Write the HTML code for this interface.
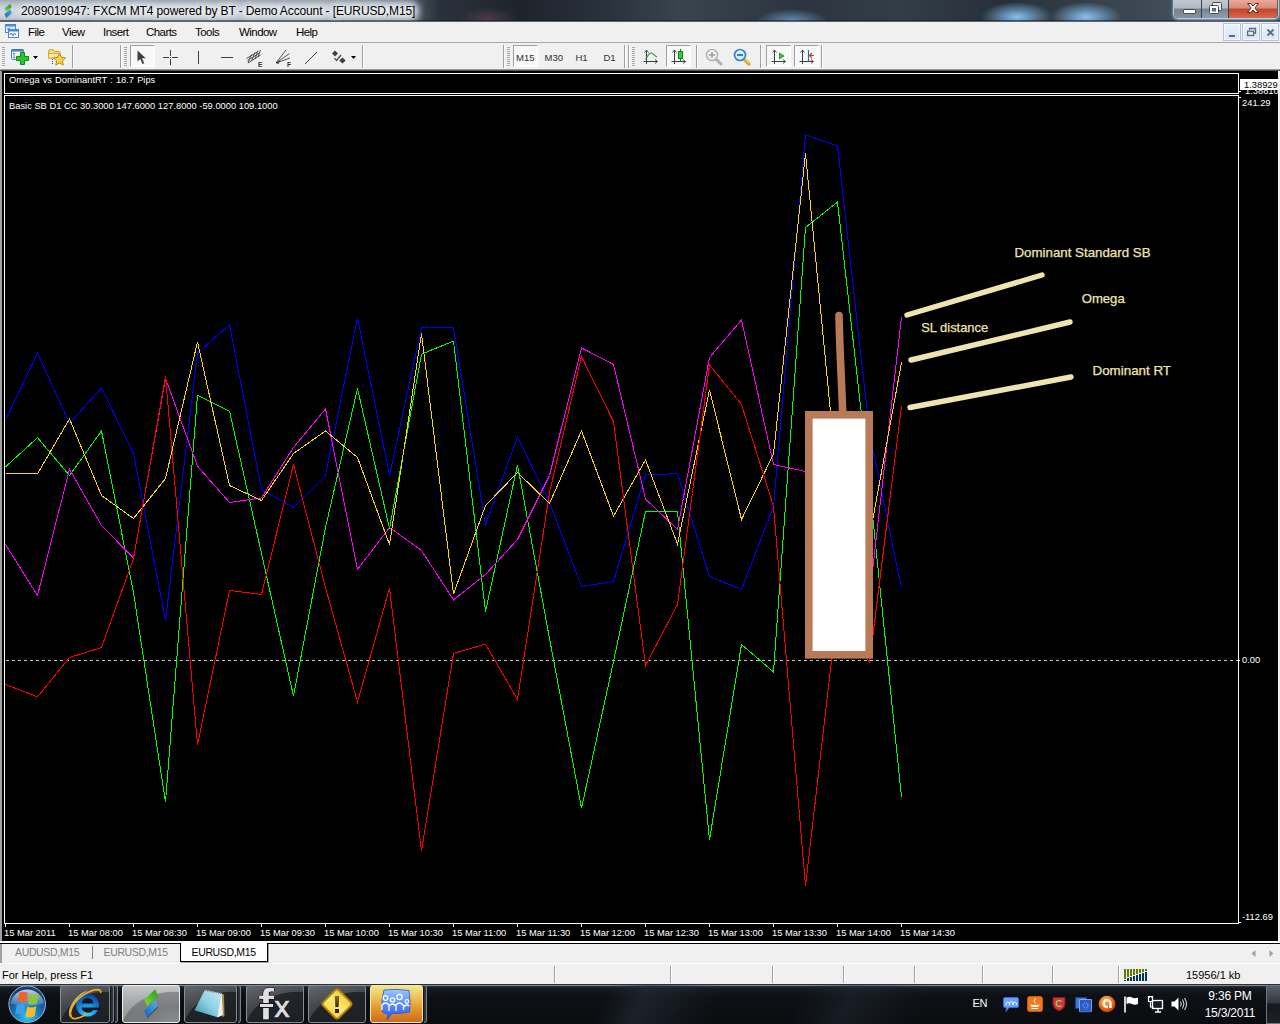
<!DOCTYPE html>
<html><head><meta charset="utf-8"><title>2089019947: FXCM MT4 powered by BT - Demo Account - [EURUSD,M15]</title>
<style>
html,body{margin:0;padding:0;}
body{width:1280px;height:1024px;overflow:hidden;position:relative;background:#f0f0f0;font-family:"Liberation Sans",sans-serif;font-size:11px;color:#000;}
.abs{position:absolute}
#title{position:absolute;left:0;top:0;width:1280px;height:21px;background:#2c343d;overflow:hidden}
#titletext{position:absolute;left:21px;top:3px;font-size:12px;letter-spacing:-0.12px;line-height:16px;white-space:nowrap;color:#000;text-shadow:0 0 6px #fff,0 0 8px #fff,0 0 10px rgba(255,255,255,.9)}
#menubar{position:absolute;left:0;top:22px;width:1280px;height:20px;background:#f0f0f0}
.mi{position:absolute;top:3.500px;font-size:11.500px;line-height:12px;white-space:nowrap;letter-spacing:-0.550px}
.mdib{position:absolute;top:1px;width:18px;height:18px;box-sizing:border-box;border:1px solid #b2c4dc;background:linear-gradient(180deg,#e8f1fb,#d9e6f5);box-shadow:inset 0 0 0 1px rgba(255,255,255,.6)}
#toolbar{position:absolute;left:0;top:43px;width:1280px;height:26px;background:#f0f0f0}
.selb{box-sizing:border-box;border:1px solid #a0a0a0;border-right-color:#fff;border-bottom-color:#fff;background:#f8f8f8}
.tf{position:absolute;top:9.500px;font-size:9.500px;line-height:10px;color:#303030;white-space:nowrap}
#chartbg{position:absolute;left:0;top:69px;width:1280px;height:872px;background:#000}
.ctext{position:absolute;color:#fff;font-size:9.330px;line-height:10px;white-space:nowrap;letter-spacing:0}
.tick{position:absolute;top:923px;width:1px;height:4px;background:#fff}
.tlab{position:absolute;top:927.500px;color:#fff;font-size:9.330px;line-height:10px;white-space:nowrap;letter-spacing:0;margin-left:-1px}
#tabbar{position:absolute;left:0;top:944px;width:1280px;height:19px;background:#f0f0f0}
#status{position:absolute;left:0;top:964px;width:1280px;height:20px;background:#f0f0f0}
#taskbar{position:absolute;left:0;top:984px;width:1280px;height:40px;background:#1b2027}
</style></head><body>
<div id="title">
<div class="abs" style="left:0;top:0;width:1280px;height:21px;background:
 radial-gradient(ellipse 36px 12px at 792px 21px, rgba(110,165,220,.8), rgba(110,165,220,0) 100%),
 radial-gradient(ellipse 36px 15px at 1017px 17px, rgba(140,200,250,.95), rgba(140,200,250,0) 100%),
 radial-gradient(ellipse 36px 15px at 1086px 17px, rgba(140,200,250,.95), rgba(140,200,250,0) 100%),
 radial-gradient(ellipse 30px 12px at 488px 19px, rgba(150,80,105,.4), rgba(150,80,105,0) 100%),
 linear-gradient(90deg,#8893a0 0,#7d8896 330px,#5a6572 400px,#2a313a 440px,#1e242c 520px,#28303a 600px,#39444f 680px,#2c353f 800px,#333d48 900px,#27303a 1000px,#3d4a56 1150px,#55636f 1280px)"></div>
<div class="abs" style="left:-12px;top:2px;width:430px;height:19px;border-radius:8px;background:#d3d9e1;filter:blur(4px)"></div>
<div class="abs" style="left:0;top:20px;width:1280px;height:1px;background:rgba(20,25,30,.55)"></div>
<svg class="abs" style="left:0px;top:0px" width="18" height="20" viewBox="0 0 18 20"><defs><linearGradient id="tg" x1="0" y1="1" x2="1" y2="0"><stop offset="0" stop-color="#7ad33a"/><stop offset="1" stop-color="#2a9a14"/></linearGradient><linearGradient id="tb" x1="0" y1="1" x2="1" y2="0"><stop offset="0" stop-color="#1468c0"/><stop offset="1" stop-color="#4aaee0"/></linearGradient></defs><path d="M10.300 3.800L11.600 7.500 5.800 11.600 4.500 8.200z" fill="url(#tg)"/><path d="M10.300 8.900L11.600 12.700 6.200 17.800 4.500 14z" fill="url(#tb)"/><path d="M6.200 17.800L11.600 12.700 12 13.300 6.600 18.300z" fill="#333" opacity=".5"/></svg>
<div id="titletext">2089019947: FXCM MT4 powered by BT - Demo Account - [EURUSD,M15]</div>
<!-- caption buttons -->
<div class="abs" style="left:1173px;top:-1px;width:104px;height:19px;border:1px solid rgba(230,240,250,.75);border-top:none;border-radius:0 0 5px 5px;box-shadow:0 1px 3px rgba(160,210,255,.8)"></div>
<div class="abs" style="left:1174px;top:0;width:28px;height:18px;border-radius:0 0 0 4px;background:linear-gradient(180deg,#c2c9d1 0,#b0b8c2 45%,#77838f 50%,#8593a0 100%);border-right:1px solid #39424c;box-sizing:border-box"></div>
<div class="abs" style="left:1202px;top:0;width:27px;height:18px;background:linear-gradient(180deg,#c2c9d1 0,#b0b8c2 45%,#77838f 50%,#8e9fb2 100%);border-right:1px solid #39424c;box-sizing:border-box"></div>
<div class="abs" style="left:1229px;top:0;width:48px;height:18px;border-radius:0 0 4px 0;background:linear-gradient(180deg,#e9a99a 0,#d98a78 45%,#c3432a 50%,#d6694c 100%)"></div>
<div class="abs" style="left:1183px;top:9px;width:11px;height:3px;background:#fff;border:1px solid #4a5058;border-radius:1px"></div>
<svg class="abs" style="left:1207px;top:1px" width="16" height="14" viewBox="0 0 16 14"><rect x="5.5" y="1.5" width="9" height="8" rx="1" fill="#e8eaec" stroke="#454b55"/><rect x="2.5" y="4.5" width="9" height="8" rx="1" fill="#fff" stroke="#454b55"/><rect x="5.5" y="7.5" width="3" height="2.5" fill="#7b8796" stroke="#454b55" stroke-width=".8"/></svg>
<svg class="abs" style="left:1246px;top:2px" width="14" height="12" viewBox="0 0 14 12"><path d="M1.5 1.5h3.2L7 4l2.3-2.5h3.2L8.8 6l3.7 4.5H9.3L7 8 4.7 10.500H1.5L5.200 6Z" fill="#fff" stroke="#5a2a25" stroke-width="1"/></svg>
</div>
<div class="abs" style="left:0;top:21px;width:1280px;height:1px;background:#5d646c"></div>
<div id="menubar">
<svg class="abs" style="left:4px;top:0px" width="16" height="18" viewBox="0 0 16 18"><rect x="1.500" y="2.500" width="10" height="8" fill="#e6f0fb" stroke="#4a86d8"/><rect x="1.500" y="2.500" width="10" height="2" fill="#4a86d8"/><rect x="4.500" y="7.500" width="10" height="8" fill="#f4f9ff" stroke="#4a86d8"/><rect x="4.500" y="7.500" width="10" height="2" fill="#4a86d8"/><path d="M6 13l1.500-2 1.500 3 1.500-3 1.500 2" stroke="#3a6fc0" fill="none" stroke-width=".9"/><path d="M3 7h2l1-1.500" stroke="#3a6fc0" fill="none" stroke-width=".9"/></svg>
<div class="mi" style="left:28px">File</div>
<div class="mi" style="left:62px">View</div>
<div class="mi" style="left:103px">Insert</div>
<div class="mi" style="left:146px">Charts</div>
<div class="mi" style="left:195px">Tools</div>
<div class="mi" style="left:239px">Window</div>
<div class="mi" style="left:296px">Help</div>
<div class="mdib" style="left:1223px"><div class="abs" style="left:5px;top:11px;width:6px;height:2px;background:#5d6b7d"></div></div>
<div class="mdib" style="left:1242px"><svg class="abs" style="left:3px;top:3px" width="11" height="10" viewBox="0 0 11 10"><path d="M3.500 3V1.500h6v4.500H8" fill="none" stroke="#5d6b7d" stroke-width="1.300"/><rect x="1.600" y="4.200" width="6" height="4.300" fill="none" stroke="#5d6b7d" stroke-width="1.300"/></svg></div>
<div class="mdib" style="left:1261px"><svg class="abs" style="left:4px;top:4px" width="9" height="9" viewBox="0 0 9 9"><path d="M1.500 1.500l6 6M7.500 1.500l-6 6" stroke="#5d6b7d" stroke-width="1.900"/></svg></div>
</div>
<div class="abs" style="left:0;top:42px;width:1280px;height:1px;background:#a8a8a8"></div>
<div id="toolbar"><div class="abs" style="left:2px;top:4px;width:3px;height:19px;background:repeating-linear-gradient(180deg,#a8a8a8 0,#a8a8a8 1px,#f0f0f0 1px,#f0f0f0 2px)"></div><svg class="abs" style="left:10px;top:5px" width="20" height="17" viewBox="0 0 20 17"><rect x="1.500" y="1.500" width="12" height="10" rx="1" fill="#f2f7fd" stroke="#3b7bd0"/><rect x="1.500" y="1.500" width="12" height="2" fill="#3b7bd0"/><path d="M4 5v5M3 6l1-1.200 1 1.200M3 9l1 1.200 1-1.200" stroke="#5a7fae" fill="none" stroke-width=".8"/><path d="M10.500 4.500h4v4h4v4h-4v4h-4v-4h-4v-4h4z" fill="#2fc42f" stroke="#0f8a12" stroke-width="1"/></svg><svg class="abs" style="left:33px;top:13px" width="5" height="3" viewBox="0 0 5 3"><path d="M0 0h5L2.500 3z" fill="#000"/></svg><svg class="abs" style="left:47px;top:5px" width="20" height="18" viewBox="0 0 20 18"><path d="M1.500 3.500q0-2 2-2h2.500l1.500 2h4.500q1 0 1 1v5.500h-11.500z" fill="#f7dc7a" stroke="#c9a227"/><path d="M1.500 5.500h11.500v4.500h-11.500z" fill="#fbeaa5" stroke="#c9a227" stroke-width=".8"/><path d="M5.500 11v6" stroke="#505050" stroke-dasharray="1 1"/><path d="M12.500 5.500l1.900 3.800 4.100.6-3 2.900.7 4.200-3.700-2-3.700 2 .7-4.200-3-2.900 4.100-.6z" fill="#f6d24a" stroke="#b88a14" stroke-width="1"/></svg><div class="abs" style="left:72px;top:2px;width:1px;height:23px;background:#a0a0a0"></div><div class="abs" style="left:73px;top:2px;width:1px;height:23px;background:#fff"></div><div class="abs" style="left:120px;top:2px;width:1px;height:23px;background:#a0a0a0"></div><div class="abs" style="left:121px;top:2px;width:1px;height:23px;background:#fff"></div><div class="abs" style="left:124px;top:4px;width:3px;height:19px;background:repeating-linear-gradient(180deg,#a8a8a8 0,#a8a8a8 1px,#f0f0f0 1px,#f0f0f0 2px)"></div><div class="abs selb" style="left:130px;top:2px;width:25px;height:22px"></div><svg class="abs" style="left:137px;top:7px" width="10" height="15" viewBox="0 0 10 15"><path d="M0.500 0.500v11l2.700-2.500 2.300 5 1.800-.8-2.300-4.900h3.800z" fill="#404040"/></svg><svg class="abs" style="left:163px;top:7px" width="15" height="15" viewBox="0 0 15 15"><path d="M7.500 0v6M7.500 9v6M0 7.500h6M9 7.500h6" stroke="#404040"/><rect x="7" y="7" width="1" height="1" fill="#404040"/></svg><div class="abs" style="left:198px;top:8px;width:1px;height:13px;background:#404040"></div><div class="abs" style="left:221px;top:14px;width:12px;height:1px;background:#404040"></div><svg class="abs" style="left:246px;top:6px" width="17" height="18" viewBox="0 0 17 18"><path d="M0.500 9.500L12 2.500M2 14L14.500 6M1.500 11.500L13.500 4" stroke="#404040" stroke-width=".9" fill="none"/><path d="M2 13.500L5.500 5.500M5.500 12L9 3.500M9 10L12 1.500M12 8L14.500 1" stroke="#404040" stroke-width=".9" fill="none"/><text x="12" y="17.500" font-family="Liberation Sans,sans-serif" font-size="6.500" font-weight="bold" fill="#303030">E</text></svg><svg class="abs" style="left:275px;top:6px" width="17" height="18" viewBox="0 0 17 18"><path d="M1 14L11 1M1 14L14.500 4.500M1 14L15 9" stroke="#404040" stroke-width=".9" fill="none"/><path d="M1 14l4-2.500-1.500 3.500z" fill="#404040"/><text x="12" y="17.500" font-family="Liberation Sans,sans-serif" font-size="6.500" font-weight="bold" fill="#303030">F</text></svg><svg class="abs" style="left:304px;top:8px" width="14" height="14" viewBox="0 0 14 14"><path d="M1 13L13 1" stroke="#404040" stroke-width="1"/></svg><svg class="abs" style="left:331px;top:7px" width="16" height="15" viewBox="0 0 16 15"><path d="M4 0.500l3 3-3 3-3-3z" fill="#404040"/><path d="M11.500 7.500l3.200 3-3.200 3-3.200-3z" fill="#404040"/><path d="M3.500 8l2 2.500L10 5" stroke="#404040" fill="none" stroke-width="1.200"/></svg><svg class="abs" style="left:351px;top:13px" width="5" height="3" viewBox="0 0 5 3"><path d="M0 0h5L2.500 3z" fill="#000"/></svg><div class="abs" style="left:362px;top:2px;width:1px;height:23px;background:#a0a0a0"></div><div class="abs" style="left:363px;top:2px;width:1px;height:23px;background:#fff"></div><div class="abs" style="left:503px;top:2px;width:1px;height:23px;background:#a0a0a0"></div><div class="abs" style="left:504px;top:2px;width:1px;height:23px;background:#fff"></div><div class="abs" style="left:507px;top:4px;width:3px;height:19px;background:repeating-linear-gradient(180deg,#a8a8a8 0,#a8a8a8 1px,#f0f0f0 1px,#f0f0f0 2px)"></div><div class="abs selb" style="left:513px;top:2px;width:25px;height:22px"></div><div class="tf" style="left:516px">M15</div><div class="tf" style="left:544.500px">M30</div><div class="tf" style="left:575.500px">H1</div><div class="tf" style="left:603.500px">D1</div><div class="abs" style="left:624px;top:2px;width:1px;height:23px;background:#a0a0a0"></div><div class="abs" style="left:625px;top:2px;width:1px;height:23px;background:#fff"></div><div class="abs" style="left:628px;top:2px;width:1px;height:23px;background:#a0a0a0"></div><div class="abs" style="left:629px;top:2px;width:1px;height:23px;background:#fff"></div><div class="abs" style="left:632px;top:4px;width:3px;height:19px;background:repeating-linear-gradient(180deg,#a8a8a8 0,#a8a8a8 1px,#f0f0f0 1px,#f0f0f0 2px)"></div><svg class="abs" style="left:643px;top:6px" width="16" height="16" viewBox="0 0 16 16"><path d="M3.500 1v14M0.500 12.500h14" stroke="#404040" fill="none"/><path d="M1.500 3.500l2-2.500 2 2.500M12 10.500l2.500 2-2.500 2" stroke="#404040" fill="none" stroke-width=".9"/><path d="M2.500 10.500C5 6 7 3.500 8.500 4S12 7 14 8" stroke="#2e9a3c" fill="none" stroke-width="1.200"/></svg><div class="abs selb" style="left:666px;top:2px;width:25px;height:22px"></div><svg class="abs" style="left:671px;top:6px" width="16" height="16" viewBox="0 0 16 16"><path d="M3.500 1v14M0.500 12.500h14" stroke="#404040" fill="none"/><path d="M1.500 3.500l2-2.500 2 2.500M12 10.500l2.500 2-2.500 2" stroke="#404040" fill="none" stroke-width=".9"/><path d="M9.500 0v12" stroke="#0a8a1a"/><rect x="7.500" y="2.500" width="4" height="7" fill="#2fd03a" stroke="#0a8a1a"/></svg><div class="abs" style="left:696px;top:2px;width:1px;height:23px;background:#a0a0a0"></div><div class="abs" style="left:697px;top:2px;width:1px;height:23px;background:#fff"></div><svg class="abs" style="left:705px;top:5px" width="18" height="18" viewBox="0 0 18 18"><path d="M10.500 10.500l5.500 5.500" stroke="#b0b0b0" stroke-width="3" stroke-linecap="round"/><circle cx="7" cy="7" r="5.500" fill="#f4f4f4" stroke="#b4b4b4" stroke-width="1.600"/><path d="M4 7h6M7 4v6" stroke="#a8a8a8" stroke-width="1.800"/></svg><svg class="abs" style="left:733px;top:5px" width="18" height="18" viewBox="0 0 18 18"><path d="M10.500 10.500l5.500 5.500" stroke="#d9a520" stroke-width="3.200" stroke-linecap="round"/><path d="M11 10l5 5" stroke="#f5d060" stroke-width="1.200" stroke-linecap="round"/><circle cx="7" cy="7" r="5.500" fill="#dcecfb" stroke="#2f7fd6" stroke-width="1.700"/><path d="M4 7h6" stroke="#2f7fd6" stroke-width="2"/></svg><div class="abs" style="left:760px;top:2px;width:1px;height:23px;background:#a0a0a0"></div><div class="abs" style="left:761px;top:2px;width:1px;height:23px;background:#fff"></div><div class="abs selb" style="left:766px;top:2px;width:25px;height:22px"></div><svg class="abs" style="left:771px;top:6px" width="16" height="16" viewBox="0 0 16 16"><path d="M3.500 1v14M0.500 12.500h14" stroke="#404040" fill="none"/><path d="M1.500 3.500l2-2.500 2 2.500M12 10.500l2.500 2-2.500 2" stroke="#404040" fill="none" stroke-width=".9"/><path d="M8.500 4l4.500 3-4.500 3z" fill="#2fc83a" stroke="#0a8a1a" stroke-width=".7"/></svg><div class="abs selb" style="left:794px;top:2px;width:25px;height:22px"></div><svg class="abs" style="left:799px;top:6px" width="16" height="16" viewBox="0 0 16 16"><path d="M3.500 1v14M0.500 12.500h14" stroke="#404040" fill="none"/><path d="M1.500 3.500l2-2.500 2 2.500M12 10.500l2.500 2-2.500 2" stroke="#404040" fill="none" stroke-width=".9"/><path d="M9.500 1v11" stroke="#1a6fc8" stroke-width="1.200"/><path d="M15 6.500h-4M13 4l-2.500 2.500L13 9" stroke="#d03a10" fill="none" stroke-width="1.200"/></svg><div class="abs" style="left:821px;top:2px;width:1px;height:23px;background:#a0a0a0"></div><div class="abs" style="left:822px;top:2px;width:1px;height:23px;background:#fff"></div></div>
<div id="chartbg"></div>

<div class="abs" style="left:0;top:69px;width:2px;height:872px;background:#a0a0a0"></div>
<div class="abs" style="left:1278px;top:69px;width:2px;height:872px;background:#f0f0f0"></div>
<div class="abs" style="left:0;top:69px;width:1280px;height:1px;background:#9a9a9a"></div>
<div class="abs" style="left:0;top:70px;width:1280px;height:1px;background:#505050"></div>
<!-- pane 1 -->
<div class="abs" style="left:4px;top:73px;width:1233px;height:19px;border:1px solid #fff"></div>
<!-- pane 2 -->
<div class="abs" style="left:4px;top:95px;width:1233px;height:827px;border:1px solid #fff"></div>
<div class="ctext" style="left:9px;top:75px;word-spacing:0.500px">Omega vs DominantRT : 18.7 Pips</div>
<div class="ctext" style="left:9px;top:100.500px">Basic SB D1 CC 30.3000 147.6000 127.8000 -59.0000 109.1000</div>
<!-- price axis -->
<div class="abs" style="left:1239px;top:91px;width:2px;height:1px;background:#fff"></div>
<div class="abs" style="left:1239px;top:97px;width:2px;height:1px;background:#fff"></div>
<div class="abs" style="left:1239px;top:660px;width:1px;height:1px;background:#fff"></div>
<div class="abs" style="left:1239px;top:922px;width:2px;height:1px;background:#fff"></div>
<div class="ctext" style="left:1245px;top:85.700px">1.38810</div>
<div class="abs" style="left:1240px;top:79px;width:38px;height:11px;background:#fff"></div>
<div class="ctext" style="left:1244px;top:79.500px;color:#000">1.38929</div>
<div class="ctext" style="left:1242px;top:98px">241.29</div>
<div class="ctext" style="left:1242px;top:655px">0.00</div>
<div class="ctext" style="left:1242px;top:912px">-112.69</div>
<!-- bottom lines -->
<div class="abs" style="left:0;top:941px;width:1280px;height:2px;background:#fff"></div>
<div class="abs" style="left:0;top:943px;width:1280px;height:1px;background:#000"></div>

<div class="tick" style="left:5px"></div><div class="tlab" style="left:5px">15 Mar 2011</div><div class="tick" style="left:69px"></div><div class="tlab" style="left:69px">15 Mar 08:00</div><div class="tick" style="left:133px"></div><div class="tlab" style="left:133px">15 Mar 08:30</div><div class="tick" style="left:197px"></div><div class="tlab" style="left:197px">15 Mar 09:00</div><div class="tick" style="left:261px"></div><div class="tlab" style="left:261px">15 Mar 09:30</div><div class="tick" style="left:325px"></div><div class="tlab" style="left:325px">15 Mar 10:00</div><div class="tick" style="left:389px"></div><div class="tlab" style="left:389px">15 Mar 10:30</div><div class="tick" style="left:453px"></div><div class="tlab" style="left:453px">15 Mar 11:00</div><div class="tick" style="left:517px"></div><div class="tlab" style="left:517px">15 Mar 11:30</div><div class="tick" style="left:581px"></div><div class="tlab" style="left:581px">15 Mar 12:00</div><div class="tick" style="left:645px"></div><div class="tlab" style="left:645px">15 Mar 12:30</div><div class="tick" style="left:709px"></div><div class="tlab" style="left:709px">15 Mar 13:00</div><div class="tick" style="left:773px"></div><div class="tlab" style="left:773px">15 Mar 13:30</div><div class="tick" style="left:837px"></div><div class="tlab" style="left:837px">15 Mar 14:00</div><div class="tick" style="left:901px"></div><div class="tlab" style="left:901px">15 Mar 14:30</div>

<svg id="chart" width="1280" height="1024" viewBox="0 0 1280 1024" style="position:absolute;left:0;top:0">
 <g fill="none" stroke-width="1" shape-rendering="crispEdges" stroke-linejoin="miter">
  <line x1="5" y1="660.5" x2="1238" y2="660.5" stroke="#c8c8c8" stroke-dasharray="3 3" stroke-dashoffset="5"/>
  <polyline stroke="#0000ff" points="5.5,420.1 37.5,352.9 69.5,423.5 101.5,387.9 133.5,453.5 165.5,620.5 197.5,352.9 229.5,324.9 261.5,489.5 293.5,507.5 325.5,475.5 357.5,317.9 389.5,475.5 421.5,327.5 453.5,327.5 485.5,524.9 517.5,436.9 549.5,502.5 581.5,586.5 613.5,581.5 645.5,474.9 677.5,473.7 709.5,576.5 741.5,589.5 773.5,506.5 805.5,134.9 837.5,145.9 869.5,432.5 901.5,588.5"/>
  <polyline stroke="#00ff00" points="5.5,466.9 37.5,437.7 69.5,475.5 101.5,430.9 133.5,592.5 165.5,802.1 197.5,395.1 229.5,411.1 261.5,553.5 293.5,696.1 325.5,527.5 357.5,388.5 389.5,528.5 421.5,354.1 453.5,341.1 485.5,611.5 517.5,464.9 549.5,638.5 581.5,808.1 613.5,661.5 645.5,511.5 677.5,511.5 709.5,839.9 741.5,644.5 773.5,671.9 805.5,227.5 837.5,202.1 869.5,485.5 901.5,797.1"/>
  <polyline stroke="#ff00ff" points="5.5,544.5 37.5,595.5 69.5,469.1 101.5,525.5 133.5,558.1 165.5,378.5 197.5,466.1 229.5,502.5 261.5,497.9 293.5,447.5 325.5,408.9 357.5,569.5 389.5,527.5 421.5,550.5 453.5,599.9 485.5,574.5 517.5,539.5 549.5,475.5 581.5,347.9 613.5,364.5 645.5,499.0 677.5,529.5 709.5,357.5 741.5,319.9 773.5,464.5 805.5,471.5 837.5,520.5 869.5,597.5 901.5,316.9"/>
  <polyline stroke="#ffd700" points="5.5,473.7 37.5,473.7 69.5,418.9 101.5,495.5 133.5,518.5 165.5,478.5 197.5,341.9 229.5,485.5 261.5,500.5 293.5,453.5 325.5,430.9 357.5,457.5 389.5,544.5 421.5,333.5 453.5,594.1 485.5,505.5 517.5,472.5 549.5,503.5 581.5,430.9 613.5,516.1 645.5,459.9 677.5,544.1 709.5,389.9 741.5,519.5 773.5,454.1 805.5,153.5 837.5,484.5 869.5,537.5 901.5,362.5"/>
  <polyline stroke="#ff0000" points="5.5,684.5 37.5,696.9 69.5,657.5 101.5,647.5 133.5,558.5 165.5,376.5 197.5,744.9 229.5,590.5 261.5,594.5 293.5,464.5 325.5,587.5 357.5,702.1 389.5,588.1 421.5,850.9 453.5,653.5 485.5,644.1 517.5,699.5 549.5,492.5 581.5,356.5 613.5,421.5 645.5,665.5 677.5,604.5 709.5,364.9 741.5,404.5 773.5,506.5 805.5,886.0 837.5,608.5 869.5,662.5 901.5,406.5"/>
 </g>
 <!-- paint annotations -->
 <g stroke="#efe4b0" stroke-width="5.400" stroke-linecap="round" fill="none">
  <line x1="907" y1="315" x2="1042" y2="275"/>
  <line x1="911" y1="360" x2="1070" y2="322"/>
  <line x1="910" y1="407.5" x2="1071" y2="377"/>
 </g>
 <path d="M839 315.500 C839.500 345 841.500 380 842.700 412" stroke="#b97a57" stroke-width="7.600" stroke-linecap="round" fill="none"/>
 <rect x="808.8" y="414.8" width="60.4" height="240" fill="#ffffff" stroke="#b97a57" stroke-width="7.6"/>
 <g font-family="'Liberation Sans',sans-serif" font-size="13" fill="#efe4b0" stroke="#efe4b0" stroke-width="0.25">
  <text x="1014.5" y="256.7" textLength="136" lengthAdjust="spacingAndGlyphs">Dominant Standard SB</text>
  <text x="1081.7" y="303" textLength="43" lengthAdjust="spacingAndGlyphs">Omega</text>
  <text x="921.2" y="331.7" textLength="67" lengthAdjust="spacingAndGlyphs">SL distance</text>
  <text x="1092.5" y="375" textLength="78.5" lengthAdjust="spacingAndGlyphs">Dominant RT</text>
 </g>
</svg>

<div id="tabbar">
<div class="abs" style="left:0;top:0;width:2px;height:19px;background:#a0a0a0"></div>
<div class="abs" style="left:15px;top:2px;font-size:10.500px;line-height:13px;color:#808080;letter-spacing:-0.35px">AUDUSD,M15</div>
<div class="abs" style="left:92px;top:2px;width:1px;height:13px;background:#808080"></div>
<div class="abs" style="left:103.500px;top:2px;font-size:10.500px;line-height:13px;color:#808080;letter-spacing:-0.35px">EURUSD,M15</div>
<div class="abs" style="left:180px;top:-1px;width:86px;height:18px;background:#fff;border:1px solid #000;border-top:none;box-shadow:1px 1px 0 #a0a0a0"></div>
<div class="abs" style="left:191.500px;top:2px;font-size:10.500px;line-height:13px;color:#000;letter-spacing:-0.35px">EURUSD,M15</div>
<svg class="abs" style="left:1250px;top:5px" width="26" height="9" viewBox="0 0 26 9"><path d="M5.500 1v7L1.500 4.500zM19.500 1v7l4-3.500z" fill="#a0a0a0"/></svg>
</div>
<div id="status"><div class="abs" style="left:0;top:-1px;width:1280px;height:1px;background:#fff"></div><div class="abs" style="left:2px;top:5px;font-size:11px;line-height:13px;letter-spacing:0px">For Help, press F1</div><div class="abs" style="left:554px;top:2px;width:1px;height:17px;background:#a0a0a0"></div><div class="abs" style="left:555px;top:2px;width:1px;height:17px;background:#fff"></div><div class="abs" style="left:670px;top:2px;width:1px;height:17px;background:#a0a0a0"></div><div class="abs" style="left:671px;top:2px;width:1px;height:17px;background:#fff"></div><div class="abs" style="left:772px;top:2px;width:1px;height:17px;background:#a0a0a0"></div><div class="abs" style="left:773px;top:2px;width:1px;height:17px;background:#fff"></div><div class="abs" style="left:843px;top:2px;width:1px;height:17px;background:#a0a0a0"></div><div class="abs" style="left:844px;top:2px;width:1px;height:17px;background:#fff"></div><div class="abs" style="left:914px;top:2px;width:1px;height:17px;background:#a0a0a0"></div><div class="abs" style="left:915px;top:2px;width:1px;height:17px;background:#fff"></div><div class="abs" style="left:982px;top:2px;width:1px;height:17px;background:#a0a0a0"></div><div class="abs" style="left:983px;top:2px;width:1px;height:17px;background:#fff"></div><div class="abs" style="left:1052px;top:2px;width:1px;height:17px;background:#a0a0a0"></div><div class="abs" style="left:1053px;top:2px;width:1px;height:17px;background:#fff"></div><div class="abs" style="left:1118px;top:2px;width:1px;height:17px;background:#a0a0a0"></div><div class="abs" style="left:1119px;top:2px;width:1px;height:17px;background:#fff"></div><div class="abs" style="left:1124px;top:5px;width:2px;height:9.5px;background:#5f7c00"></div><div class="abs" style="left:1124px;top:15.5px;width:2px;height:1.5px;background:#00395c"></div><div class="abs" style="left:1127px;top:5px;width:2px;height:8.4px;background:#5f7c00"></div><div class="abs" style="left:1127px;top:14.4px;width:2px;height:2.6px;background:#00395c"></div><div class="abs" style="left:1130px;top:5px;width:2px;height:7.4px;background:#5f7c00"></div><div class="abs" style="left:1130px;top:13.4px;width:2px;height:3.6px;background:#00395c"></div><div class="abs" style="left:1133px;top:5px;width:2px;height:6.3px;background:#5f7c00"></div><div class="abs" style="left:1133px;top:12.3px;width:2px;height:4.7px;background:#00395c"></div><div class="abs" style="left:1136px;top:5px;width:2px;height:5.2px;background:#5f7c00"></div><div class="abs" style="left:1136px;top:11.2px;width:2px;height:5.8px;background:#00395c"></div><div class="abs" style="left:1139px;top:5px;width:2px;height:4.1px;background:#5f7c00"></div><div class="abs" style="left:1139px;top:10.1px;width:2px;height:6.9px;background:#00395c"></div><div class="abs" style="left:1142px;top:5px;width:2px;height:3.1px;background:#5f7c00"></div><div class="abs" style="left:1142px;top:9.1px;width:2px;height:7.9px;background:#00395c"></div><div class="abs" style="left:1145px;top:5px;width:2px;height:2.0px;background:#5f7c00"></div><div class="abs" style="left:1145px;top:8.0px;width:2px;height:9.0px;background:#00395c"></div><div class="abs" style="left:1186px;top:5px;font-size:11px;line-height:13px;letter-spacing:0px">15956/1 kb</div></div>
<div id="taskbar"><div class="abs" style="left:0;top:0;width:1280px;height:40px;background:linear-gradient(115deg,rgba(40,50,62,0) 0,rgba(40,50,62,0) 47%,rgba(40,50,62,.55) 50%,rgba(40,50,62,0) 56%,rgba(40,50,62,.0) 62%,rgba(40,50,62,.4) 66%,rgba(40,50,62,0) 72%),linear-gradient(180deg,#2a3038 0,#2a3038 1px,#7d8791 1px,#7d8791 2px,#2c333b 2px,#171b21 4px,#0d1014 12px,#0a0c10 100%)"></div><svg class="abs" style="left:7px;top:1px" width="40" height="39" viewBox="0 0 40 39">
<defs><radialGradient id="og" cx="50%" cy="85%" r="75%"><stop offset="0" stop-color="#1ed0ff"/><stop offset=".45" stop-color="#1878c0"/><stop offset="1" stop-color="#0e3f78"/></radialGradient>
<linearGradient id="oh" x1="0" y1="0" x2="0" y2="1"><stop offset="0" stop-color="#fff" stop-opacity=".75"/><stop offset="1" stop-color="#fff" stop-opacity=".12"/></linearGradient></defs>
<circle cx="20.200" cy="19.200" r="18.300" fill="url(#og)" stroke="#9fb8cc" stroke-width="1"/>
<path d="M3.500 18.500A17 17 0 0 1 37 18.500Q20 23.500 3.500 18.500z" fill="url(#oh)"/>
<g transform="translate(20.200 19.700) scale(1.220) translate(-19.500 -19.500)"><path d="M13 9.500q3.500-1.500 7 .5l-1.500 8q-3.500-2-7-.5z" fill="#f0642a"/>
<path d="M21.500 10.500q3.500 2 7.500-.5l-1.500 8.500q-4 2-7.500 0z" fill="#8cc63e"/>
<path d="M11 19.500q3.500-1.500 7 .5l-1.500 8q-3.500-2-7-.5z" fill="#3aa0e8"/>
<path d="M19.500 21q3.500 2 7.500-.5l-1.500 8.500q-4 2-7.500 0z" fill="#fdb92a"/></g>
</svg><div class="abs" style="left:60px;top:1px;width:50px;height:38px;box-sizing:border-box;border:1px solid #878d93;border-radius:3px;background:radial-gradient(ellipse 95% 115% at 90% 130%,rgba(22,25,29,.75) 0,rgba(22,25,29,.75) 98%,rgba(0,0,0,0) 100%),linear-gradient(165deg,#63676c 0,#43474c 45%,#2c3035 100%)"></div><div class="abs" style="left:111px;top:1px;width:3px;height:38px;box-sizing:border-box;border:1px solid #7a8086;border-left:none;border-radius:0 3px 3px 0;background:#2e3238"></div><div class="abs" style="left:115px;top:1px;width:3px;height:38px;box-sizing:border-box;border:1px solid #7a8086;border-left:none;border-radius:0 3px 3px 0;background:#2e3238"></div><svg class="abs" style="left:66px;top:2px" width="40" height="38" viewBox="0 0 40 38">
<defs><radialGradient id="ieg" cx="50%" cy="85%" r="85%"><stop offset="0" stop-color="#3fd0ff"/><stop offset=".5" stop-color="#1684e0"/><stop offset="1" stop-color="#0a3c98"/></radialGradient></defs>
<path d="M4 31Q0 24 10 12Q15 6.500 22 4Q12 11 7.500 19Q4 26 6 31z" fill="#d8c870" opacity=".9"/>
<circle cx="21.500" cy="19" r="11.500" fill="url(#ieg)"/>
<path d="M15.800 17.500A5.800 5.500 0 0 1 27.400 17.500z" fill="#15181c"/>
<path d="M15.800 21.500H34v2.500H27.500A6.200 5 0 0 1 15.800 21.500z" fill="#15181c"/>
<path d="M5.500 31.500C1 26 9 14 19 8S36 2.500 34.500 7" stroke="#f0aa18" stroke-width="1.700" fill="none"/>
<path d="M5.500 31.500C8 33.500 14 32 20 28.500" stroke="#f0aa18" stroke-width="1.700" fill="none"/>
</svg><div class="abs" style="left:122px;top:1px;width:58px;height:38px;box-sizing:border-box;border:1px solid #eceef0;border-radius:3px;background:radial-gradient(ellipse 95% 115% at 90% 130%,rgba(70,72,75,.0) 0,rgba(70,72,75,.42) 60%,rgba(70,72,75,.42) 98%,rgba(0,0,0,0) 100%),linear-gradient(180deg,#c4c6c8 0,#a4a6a8 50%,#98999b 100%)"></div><svg class="abs" style="left:140px;top:3px" width="24" height="34" viewBox="0 0 24 34">
<defs><linearGradient id="mg" x1="0" y1="1" x2="1" y2="0"><stop offset="0" stop-color="#86e03a"/><stop offset="1" stop-color="#1e9a10"/></linearGradient>
<linearGradient id="mb" x1="0" y1="1" x2="1" y2="0"><stop offset="0" stop-color="#0e60c0"/><stop offset="1" stop-color="#56b4e8"/></linearGradient></defs>
<path d="M15.200 2.200L18 9.200 7.200 19 4.400 12.500z" fill="url(#mg)"/>
<path d="M15.200 13L17.500 19.500 7.200 30.300 4.200 23.700z" fill="url(#mb)"/>
<path d="M7.200 30.300L17.500 19.500 18 20.500 7.700 31z" fill="#1a1a1a" opacity=".55"/>
</svg><div class="abs" style="left:184px;top:1px;width:53px;height:38px;box-sizing:border-box;border:1px solid #878d93;border-radius:3px;background:radial-gradient(ellipse 95% 115% at 90% 130%,rgba(22,25,29,.75) 0,rgba(22,25,29,.75) 98%,rgba(0,0,0,0) 100%),linear-gradient(165deg,#63676c 0,#43474c 45%,#2c3035 100%)"></div><div class="abs" style="left:238px;top:1px;width:3px;height:38px;box-sizing:border-box;border:1px solid #7a8086;border-left:none;border-radius:0 3px 3px 0;background:#2e3238"></div><svg class="abs" style="left:190px;top:3px" width="40" height="34" viewBox="0 0 40 34">
<defs><linearGradient id="ng" x1="0" y1="1" x2="1" y2="0"><stop offset="0" stop-color="#2f93a8"/><stop offset=".5" stop-color="#8fd0e2"/><stop offset="1" stop-color="#c9ecf6"/></linearGradient></defs>
<path d="M31.500 6.500l2.500 1 .5 21-2 2z" fill="#b88a3c"/>
<path d="M14.800 3L31.700 6.400 32.700 28 27.500 30.300z" fill="#f2f6f8"/>
<path d="M14.800 3L31.700 6.400 27.500 30.300 4.500 23.200z" fill="url(#ng)"/>
<path d="M27.500 30.300L31.700 6.400 32.700 28z" fill="#e8eef2"/>
<path d="M15 3.200L31.700 6.500" stroke="#6a7278" stroke-width="1.600" stroke-dasharray="1 1.200"/>
</svg><div class="abs" style="left:246px;top:1px;width:58px;height:38px;box-sizing:border-box;border:1px solid #878d93;border-radius:3px;background:radial-gradient(ellipse 95% 115% at 90% 130%,rgba(22,25,29,.75) 0,rgba(22,25,29,.75) 98%,rgba(0,0,0,0) 100%),linear-gradient(165deg,#63676c 0,#43474c 45%,#2c3035 100%)"></div><div class="abs" style="left:259px;top:0px;font-family:'Liberation Sans',sans-serif;font-weight:normal;font-size:42px;line-height:42px;color:#e0e0e0;-webkit-text-stroke:0.600px #e0e0e0;text-shadow:1px 0 0 #161616,-1px 0 0 #161616,0 1px 0 #161616,0 -1px 0 #161616;transform:scaleX(1.250);transform-origin:0 0">f</div>
<div class="abs" style="left:260px;top:20px;width:13px;height:3px;background:#e0e0e0;box-shadow:0 0 0 1px #161616"></div>
<div class="abs" style="left:274.500px;top:8px;font-family:'Liberation Sans',sans-serif;font-weight:normal;font-size:30px;line-height:30px;color:#dedede;-webkit-text-stroke:0.700px #dedede;text-shadow:1px 0 0 #161616,-1px 0 0 #161616,0 1px 0 #161616,0 -1px 0 #161616">x</div><div class="abs" style="left:308px;top:1px;width:58px;height:38px;box-sizing:border-box;border:1px solid #878d93;border-radius:3px;background:radial-gradient(ellipse 95% 115% at 90% 130%,rgba(22,25,29,.75) 0,rgba(22,25,29,.75) 98%,rgba(0,0,0,0) 100%),linear-gradient(165deg,#63676c 0,#43474c 45%,#2c3035 100%)"></div><svg class="abs" style="left:319px;top:2px" width="36" height="36" viewBox="0 0 36 36">
<defs><linearGradient id="wg" x1="0" y1="0" x2="0" y2="1"><stop offset="0" stop-color="#f2d23a"/><stop offset=".5" stop-color="#f8e878"/><stop offset="1" stop-color="#f4dc50"/></linearGradient>
<linearGradient id="wb" x1="0" y1="0" x2="0" y2="1"><stop offset="0" stop-color="#8a6a3a"/><stop offset="1" stop-color="#3a2208"/></linearGradient></defs>
<rect x="7" y="7" width="22" height="22" rx="3" transform="rotate(45 18 18)" fill="url(#wg)" stroke="#b8820a" stroke-width="2"/>
<path d="M15.800 10h4.400l-.6 11h-3.200z" fill="url(#wb)"/><rect x="16" y="23" width="4" height="4" fill="#3a2208"/>
</svg><div class="abs" style="left:370px;top:1px;width:53px;height:38px;box-sizing:border-box;border:1px solid #f6e9b0;border-radius:3px;background:linear-gradient(180deg,#f3e58a 0,#ecc050 35%,#e39a30 60%,#cf6a1c 100%)"></div><div class="abs" style="left:424px;top:1px;width:3px;height:38px;box-sizing:border-box;border:1px solid #7a8086;border-left:none;border-radius:0 3px 3px 0;background:#2e3238"></div><svg class="abs" style="left:379px;top:3px" width="34" height="34" viewBox="0 0 34 34">
<defs><linearGradient id="pg" x1="0" y1="0" x2="0" y2="1"><stop offset="0" stop-color="#9cc8ff"/><stop offset=".45" stop-color="#5a90ff"/><stop offset="1" stop-color="#2e5cf0"/></linearGradient></defs>
<path d="M5 3Q17 1.500 30 3.500Q32 14 30.500 25Q20 27 13 26.500L8 33 9 26.500Q4.500 26.500 3.500 25Q1.500 13 5 3z" fill="url(#pg)" stroke="#2a50e0" stroke-width=".8"/>
<g fill="none" stroke="#fff" stroke-width="1.300"><circle cx="6.500" cy="11" r="2.300"/><circle cx="13.500" cy="13" r="2.100"/><circle cx="20.500" cy="10" r="2.600"/><circle cx="28" cy="14.500" r="1.800"/>
<path d="M3 23v-5q3.500-4 7 0M10 24v-5q3.500-4 7 0v5M16 19q4.500-6 9 0M24.500 23v-3q3-3.500 6 -1"/></g>
</svg>
<div class="abs" style="left:972.500px;top:13px;font-size:11px;line-height:13px;color:#fff;letter-spacing:-0.3px">EN</div>
<svg class="abs" style="left:1003px;top:12px" width="16" height="17" viewBox="0 0 16 17"><path d="M2 1.500h12q1.500 0 1.500 1.500v7q0 1.500-1.500 1.500H6L3 15.500 3.500 11.500H2Q.500 11.500.500 10V3Q.500 1.500 2 1.500z" fill="#6aa0ff" stroke="#3a68e0"/><path d="M3 9V7q2-2 3.500 0V9M6.500 9V6.500q2-2 3.500 0V9M10 9V7q2-2 3.500 0V9" stroke="#fff" fill="none" stroke-width=".9"/></svg>
<svg class="abs" style="left:1027px;top:12px" width="16" height="16" viewBox="0 0 16 16"><rect x=".5" y=".5" width="15" height="15" rx="2" fill="#f07818" stroke="#c85a0a"/><path d="M8.500 2.500q-3 3 0 5M4 10.500h7.500M4.500 12.500h6.500M3.500 9q4.500 1 9 0" stroke="#fff" fill="none" stroke-width="1"/></svg>
<svg class="abs" style="left:1052px;top:12px" width="14" height="16" viewBox="0 0 14 16"><path d="M1 1.500h12v7q0 4-6 6.500-6-2.500-6-6.500z" fill="#d8323a" stroke="#8a1418"/><path d="M9.500 5.500a3 3 0 1 0 0 4" stroke="#78d060" fill="none" stroke-width="1.500"/></svg>
<svg class="abs" style="left:1075px;top:12px" width="17" height="17" viewBox="0 0 17 17"><path d="M.500 1.500h11v11h-11z" fill="#3a78d8" stroke="#1a3f90"/><path d="M4.500 3.500h12v12h-12z" fill="#2a5ac8" stroke="#9ab8e8" stroke-width=".8"/><circle cx="10.500" cy="9.500" r="2.500" fill="none" stroke="#a8d0ff" stroke-dasharray="1 1"/><path d="M5 16h11" stroke="#1a3f90"/></svg>
<svg class="abs" style="left:1098px;top:11px" width="18" height="18" viewBox="0 0 18 18"><defs><radialGradient id="av" cx="40%" cy="30%" r="75%"><stop offset="0" stop-color="#ffb050"/><stop offset=".6" stop-color="#f06a10"/><stop offset="1" stop-color="#b83c00"/></radialGradient></defs><circle cx="9" cy="9" r="8.300" fill="url(#av)"/><path d="M12.500 13V8.500a3.500 3.500 0 1 0-3.500 3.500h1" stroke="#fff" stroke-width="2.300" fill="none"/></svg>
<svg class="abs" style="left:1123px;top:11px" width="17" height="18" viewBox="0 0 17 18"><path d="M2 1.500v16" stroke="#fff" stroke-width="1.600"/><path d="M3.500 2.500q3-1.500 5.500 0t6 0v6.500q-3.500 1.500-6 0t-5.500 0z" fill="#fff"/></svg>
<svg class="abs" style="left:1147px;top:11px" width="17" height="18" viewBox="0 0 17 18"><rect x="5.500" y="5.500" width="10" height="8" fill="#1a1e24" stroke="#fff" stroke-width="1.300"/><path d="M8 17h6M11 14v3" stroke="#fff" stroke-width="1.300"/><path d="M1.500 1.500h4v5h-4zM3.500 6.500V12h3" stroke="#fff" fill="none" stroke-width="1.200"/><path d="M2.500 1v2M4.500 1v2" stroke="#fff" stroke-width=".8"/></svg>
<svg class="abs" style="left:1170px;top:12px" width="18" height="16" viewBox="0 0 18 16"><path d="M1.500 5.500h3l4-4v13l-4-4h-3z" fill="#fff"/><path d="M10.500 5.500q1.500 2.500 0 5M12.500 3.500q3 4.500 0 9M14.500 2q4 6 0 12" stroke="#fff" fill="none" stroke-width="1" opacity=".9"/></svg>
<div class="abs" style="left:1200px;top:5px;width:60px;text-align:center;font-size:12px;line-height:14px;color:#fff;letter-spacing:-0.2px">9:36 PM</div>
<div class="abs" style="left:1200px;top:22px;width:60px;text-align:center;font-size:12px;line-height:14px;color:#fff;letter-spacing:-0.2px">15/3/2011</div>
<div class="abs" style="left:1266px;top:1px;width:14px;height:39px;box-sizing:border-box;border:1px solid #6f767e;border-right:none;background:linear-gradient(180deg,#5a6068 0,#33383f 45%,#15181c 50%,#1e2228 100%)"></div>
</div>
</body></html>
